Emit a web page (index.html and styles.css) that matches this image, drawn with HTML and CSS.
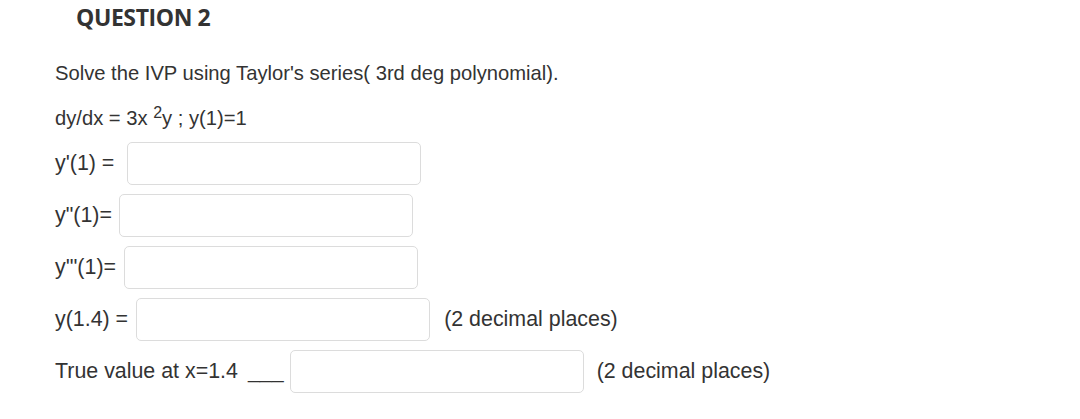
FILE: index.html
```html
<!DOCTYPE html>
<html>
<head>
<meta charset="utf-8">
<link rel="stylesheet" href="styles.css">
</head>
<body>
<div class="page">
  <h2 class="qtitle">QUESTION 2</h2>
  <div class="qbody">
    <p class="line intro">Solve the IVP using Taylor's series( 3rd deg polynomial).</p>
    <p class="line eq">dy/dx = 3x <sup class="sup">2</sup>y ; y(1)=1</p>
    <div class="row"><span class="lbl g1">y'(1) =</span><span class="field"></span></div>
    <div class="row"><span class="lbl g2">y"(1)=</span><span class="field"></span></div>
    <div class="row"><span class="lbl g3">y'"(1)=</span><span class="field"></span></div>
    <div class="row"><span class="lbl g4">y(1.4) =</span><span class="field"></span><span class="note">(2 decimal places)</span></div>
    <div class="row"><span class="lbl g5">True value at x=1.4<span class="blank">___</span></span><span class="field"></span><span class="note n2">(2 decimal places)</span></div>
  </div>
</div>
</body>
</html>
```

FILE: styles.css
```css
html, body {
  margin: 0;
  padding: 0;
  background: #ffffff;
}
.page {
  width: 1080px;
  height: 419px;
  overflow: hidden;
}
.qtitle {
  margin: 0;
  padding: 3px 0 0 76px;
  font-family: "Open Sans", sans-serif;
  font-weight: 700;
  font-size: 23px;
  line-height: 28px;
  color: #333333;
  letter-spacing: -0.4px;
}
.qbody {
  padding: 30px 0 0 55px;
  font-family: "Liberation Sans", Arial, sans-serif;
  font-size: 20.2px;
  color: #333333;
}
.line {
  margin: 0;
  line-height: 24px;
}
.intro {
  margin-bottom: 21px;
}
.eq {
  margin-bottom: 12px;
}
.sup {
  font-size: 16px;
  line-height: 0;
  vertical-align: 7px;
}
.row {
  display: flex;
  align-items: center;
  height: 43px;
  margin-bottom: 9px;
  font-size: 21.4px;
}
.lbl {
  white-space: pre;
}
.g1 { margin-right: 13px; }
.g2 { margin-right: 7px; }
.g3 { margin-right: 8px; }
.g4 { margin-right: 8px; }
.g5 { margin-right: 6px; }
.blank {
  margin-left: 10px;
}
.field {
  box-sizing: border-box;
  width: 294px;
  height: 43px;
  border: 1px solid #dcdcdc;
  border-radius: 5px;
  background: #ffffff;
}
.note {
  margin-left: 14px;
}
.note.n2 {
  margin-left: 13px;
}
```
